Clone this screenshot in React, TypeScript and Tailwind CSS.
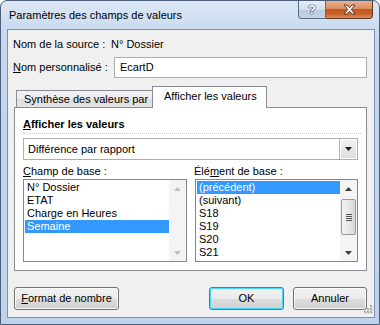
import React from "react";

const U = ({ c }: { c: string }) => <span className="underline underline-offset-[1px]">{c}</span>;

function Tri({ up, color }: { up?: boolean; color: string }) {
  return (
    <svg width="7" height="4" viewBox="0 0 7 4">
      <path d={up ? "M0 4 L3.5 0 L7 4 Z" : "M0 0 L7 0 L3.5 4 Z"} fill={color} />
    </svg>
  );
}

function ScrollBar({ active }: { active: boolean }) {
  const c = active ? "#3c3c3c" : "#c2c2c2";
  return (
    <div className="flex w-[17px] flex-col bg-[#f4f4f4]">
      <div className="flex h-[17px] items-center justify-center">
        <Tri up color={c} />
      </div>
      <div className="flex-1 px-[1px] pt-[2px]">
        {active && (
          <div className="flex h-[36px] flex-col items-center justify-center gap-[1px] rounded-[2px] border border-[#9a9a9a] bg-gradient-to-r from-[#f3f3f3] via-[#e8e8e8] to-[#d6d6d6]">
            <div className="h-px w-[6px] bg-[#555]" />
            <div className="h-px w-[6px] bg-[#555]" />
            <div className="h-px w-[6px] bg-[#555]" />
            <div className="h-px w-[6px] bg-[#555]" />
          </div>
        )}
      </div>
      <div className="flex h-[17px] items-center justify-center">
        <Tri color={c} />
      </div>
    </div>
  );
}

function ListBox({ items, sel, active, w }: { items: string[]; sel: number; active: boolean; w: string }) {
  return (
    <div className={`flex h-[83px] ${w} border border-[#828790] bg-white`}>
      <div className="flex flex-1 flex-col pl-[1px] pt-[1px]">
        {items.map((it, i) => (
          <div
            key={it}
            className={`h-[13px] pl-[2px] leading-[13px] ${i === sel ? "bg-[#3399ff] text-white" : ""}`}
          >
            {it}
          </div>
        ))}
      </div>
      <ScrollBar active={active} />
    </div>
  );
}

function Btn({ children, def, w }: { children: React.ReactNode; def?: boolean; w: string }) {
  return (
    <div
      className={`flex h-[23px] ${w} items-center justify-center rounded-[3px] border ${
        def ? "border-[#3c7fb1] shadow-[inset_0_0_0_1px_#48d8fb]" : "border-[#707070] shadow-[inset_0_0_0_1px_#fbfbfb]"
      } bg-[linear-gradient(#f2f2f2_0%,#ebebeb_50%,#dddddd_51%,#cfcfcf_100%)]`}
    >
      {children}
    </div>
  );
}

export default function App() {
  return (
    <div className="flex h-[325px] w-[380px] flex-col rounded-t-[7px] border border-[#4b5d78] bg-[linear-gradient(#dbe7f5,#c4d7ee_40px,#bfd3eb)] font-['Liberation_Sans',Arial,sans-serif] text-[11px] text-black">
      <div className="flex h-[28px] items-start justify-between pl-[8px] pr-[6px]">
        <div className="pt-[7px] leading-[14px]">Paramètres des champs de valeurs</div>
        <div className="flex">
          <div className="flex h-[18px] w-[28px] items-center justify-center rounded-bl-[4px] border border-t-0 border-[#5b6c86] bg-[linear-gradient(#e6eef8,#d2deed_50%,#b9c9de_51%,#c6d5e8)] text-[13px] font-bold leading-none text-white [text-shadow:0_0_1px_#243650,0_0_1px_#243650,0_0_1px_#243650]">
            ?
          </div>
          <div className="flex h-[18px] w-[47px] items-center justify-center rounded-br-[4px] border border-t-0 border-l-0 border-[#5b3a2a] bg-[linear-gradient(#eab28e,#de8f5e_45%,#c4581f_50%,#c5612b_75%,#dc8a52)]">
            <svg width="13" height="11" viewBox="0 0 13 11">
              <path
                d="M1 1 L4 1 L6.5 3.8 L9 1 L12 1 L8.3 5.5 L12 10 L9 10 L6.5 7.2 L4 10 L1 10 L4.7 5.5 Z"
                fill="#ffffff"
                stroke="#4a2a18"
                strokeWidth="0.9"
              />
            </svg>
          </div>
        </div>
      </div>
      <div className="flex flex-1 px-[6px] pb-[6px]">
        <div className="relative flex flex-1 flex-col border border-[#7f92b0] bg-[#f0f0f0] pl-[6px] pr-[7px]">
          <div className="ml-[-1px] mt-[7px] flex h-[14px] leading-[14px]">
            <div className="w-[98px]">Nom de la source :</div>
            <div>N° Dossier</div>
          </div>
          <div className="ml-[-1px] mt-[6px] flex h-[21px] items-center">
            <div className="w-[101px]">
              <U c="N" />om personnalisé :
            </div>
            <div className="flex h-[21px] w-[253px] items-center border border-[#abadb3] bg-white pl-[5px]">EcartD</div>
          </div>
          <div className="mt-[8px] flex h-[21px] items-end pl-[2px]">
            <div className="flex h-[17px] w-[137px] items-center border border-b-0 border-[#898c95] bg-[linear-gradient(#f2f2f2,#ebebeb_50%,#dddddd_51%,#e4e4e4)] pl-[7px]">
              Synthèse des valeurs par
            </div>
            <div className="relative z-10 -mb-px -ml-px flex h-[22px] w-[115px] items-center border border-b-0 border-[#898c95] bg-white pb-[2px] pl-[11px]">
              Afficher les valeurs
            </div>
          </div>
          <div className="flex h-[164px] flex-col border border-[#898c95] bg-white pl-[8px] pr-[5px]">
            <div className="mt-[9px] h-[14px] font-bold leading-[14px]">
              <U c="A" />fficher les valeurs
            </div>
            <div className="mt-[2px] h-px border-t border-dotted border-[#c8c8c8]" />
            <div className="mt-[4px] flex h-[22px] w-[335px] items-center border border-[#abadb3] bg-white">
              <div className="flex-1 pl-[4px]">Différence par rapport</div>
              <div className="flex h-[20px] w-[18px] items-center justify-center border-l border-[#a4b4c8] bg-[linear-gradient(#f2f2f2,#dcdcdc)] shadow-[inset_0_0_0_1px_#fff]">
                <Tri color="#1a1a2a" />
              </div>
            </div>
            <div className="mt-[4px] flex h-[14px] leading-[14px]">
              <div className="w-[171px]">
                <U c="C" />hamp de base :
              </div>
              <div>
                Élé<U c="m" />ent de base :
              </div>
            </div>
            <div className="mt-[1px] flex gap-[8px]">
              <ListBox w="w-[164px]" items={["N° Dossier", "ETAT", "Charge en Heures", "Semaine"]} sel={3} active={false} />
              <ListBox
                w="w-[163px]"
                items={["(précédent)", "(suivant)", "S18", "S19", "S20", "S21"]}
                sel={0}
                active
              />
            </div>
          </div>
          <div className="mt-[16px] flex">
            <Btn w="w-[105px]">
              <span>
                <U c="F" />ormat de nombre
              </span>
            </Btn>
            <div className="flex-1" />
            <Btn def w="w-[75px]">
              OK
            </Btn>
            <div className="w-[9px]" />
            <Btn w="w-[74px]">Annuler</Btn>
          </div>
          <svg className="absolute bottom-[1px] right-[1px]" width="11" height="11" viewBox="0 0 11 11">
            {[
              [9, 1],
              [9, 4],
              [6, 4],
              [9, 7],
              [6, 7],
              [3, 7],
            ].map(([x, y], i) => (
              <g key={i}>
                <rect x={x} y={y} width="1.5" height="1.5" fill="#b8b8b8" />
                <rect x={x - 1} y={y - 1} width="1.5" height="1.5" fill="#8a8a8a" />
              </g>
            ))}
          </svg>
        </div>
      </div>
    </div>
  );
}
